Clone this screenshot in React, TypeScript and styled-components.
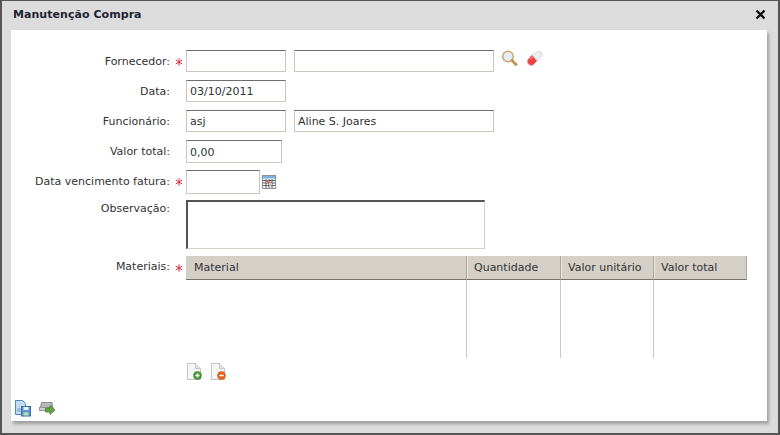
import React from "react";
import styled, { createGlobalStyle } from "styled-components";

const Global = createGlobalStyle`
  html, body { margin: 0; padding: 0; background: #ddd; overflow: hidden; }
  body { font-family: "DejaVu Sans", Verdana, sans-serif; font-size: 11px; color: #333; }
`;

const Dialog = styled.div`
  width: 780px; height: 435px; box-sizing: border-box;
  background: #dcdcdc;
  border-style: solid; border-color: #555;
  border-width: 1px 2px 2px 2px;
  padding: 0 11px 0 9px;
  display: flex; flex-direction: column;
`;
const TitleBar = styled.div`
  height: 29px; box-sizing: border-box; flex: none; display: flex; align-items: center; justify-content: space-between;
  padding: 0 1px 3px 2px;
`;
const Title = styled.h1`
  margin: 0; font-size: 11px; font-weight: bold; color: #1c2433; letter-spacing: 0.05px;
`;
const Close = styled.svg`
  width: 11px; height: 11px; display: block; margin-right: 0;
`;
const Panel = styled.div`
  height: 391px; flex: none; box-sizing: border-box; background: #fff;
  box-shadow: 2px 3px 3px rgba(0,0,0,0.28);
  padding-top: 20px; display: flex; flex-direction: column;
`;
const Row = styled.div<{ $mt?: number }>`
  display: flex; align-items: flex-start; margin-top: ${p => p.$mt ?? 8}px;
`;
const Label = styled.label<{ $pt?: number }>`
  width: 159px; flex: none; text-align: right; line-height: 14px; padding-top: ${p => p.$pt ?? 5}px; color: #333;
`;
const Req = styled.span`
  width: 16px; flex: none; box-sizing: border-box; padding: 8px 0 0 5px; display: block; height: 20px;
`;
const Input = styled.input<{ $w: number; $h?: number; $ml?: number }>`
  width: ${p => p.$w}px; height: ${p => p.$h ?? 22}px; box-sizing: border-box; flex: none;
  margin: 0 0 0 ${p => p.$ml ?? 0}px;
  border: 1px solid #c9c6be; border-top-color: #6e6e6e; border-radius: 0; outline: none;
  padding: 1px 3px 0; background: #fff; color: #333;
  font: 11px "DejaVu Sans", Verdana, sans-serif;
`;
const TextArea = styled.textarea`
  width: 299px; height: 49px; box-sizing: border-box; flex: none; display: block; margin: 0;
  border: 1px solid #d4d0c8; border-top: 2px solid #555; border-left: 2px solid #555;
  outline: none; resize: none; background: #fff; padding: 2px;
`;
const RowIcon = styled.svg<{ $ml: number; $mt?: number }>`
  display: block; flex: none; margin-left: ${p => p.$ml}px; margin-top: ${p => p.$mt ?? 0}px;
`;
const Table = styled.div`
  width: 561px; flex: none; height: 102px;
  display: grid; grid-template-columns: 281px 94px 93px 93px; grid-template-rows: 24px 78px;
`;
const Head = styled.div`
  background: #d4d0c8; border-bottom: 1px solid #77746e; box-sizing: border-box;
  padding: 0 0 0 7px; line-height: 23px; color: #333; position: relative;
  border-right: 1px solid #aaa7a0;
  box-shadow: inset 1px 0 0 #e8e6e1;
  &:first-child { box-shadow: none; padding-left: 8px; }
  &:last-child { border-right: 0; }
`;
const Cell = styled.div`
  border-right: 1px solid #c8c8c8; box-sizing: border-box;
  &:last-child { border-right: 0; }
`;
const Actions = styled.div`
  display: flex; gap: 7px; padding-left: 175px; margin-top: 5px; height: 18px;
`;
const Footer = styled.div`
  display: flex; gap: 7px; padding-left: 3px; margin-top: 19px;
`;
const Svg = styled.svg`
  display: block; flex: none;
`;

const Star = () => (
  <Svg width="8" height="8" viewBox="0 0 8 8">
    <path d="M4 .3V7.7M.8 2L7.2 6M7.2 2L.8 6" stroke="#d8283a" strokeWidth="1" fill="none" />
  </Svg>
);

const Page = ({ children }: { children?: React.ReactNode }) => (
  <>
    <path d="M1.5.5H9.5L14.5 5.5V16.5H1.5Z" fill="#f6f6f6" stroke="#c4c4c4" />
    <path d="M9.5.5V5.5H14.5" fill="#e4e4e4" stroke="#c4c4c4" />
    {children}
  </>
);

export default function App() {
  return (
    <>
      <Global />
      <Dialog>
        <TitleBar>
          <Title>Manutenção Compra</Title>
          <Close viewBox="0 0 11 11">
            <path d="M1.5 1.5L9.5 9.5M9.5 1.5L1.5 9.5" stroke="#111" strokeWidth="2.4" />
          </Close>
        </TitleBar>
        <Panel>
          <Row $mt={0}>
            <Label>Fornecedor:</Label>
            <Req><Star /></Req>
            <Input $w={100} />
            <Input $w={200} $ml={8} />
            <RowIcon $ml={7} width="18" height="17" viewBox="0 0 18 17">
              <circle cx="7" cy="6.5" r="5.3" fill="#e4edf6" stroke="#d2a468" strokeWidth="1.5" />
              <path d="M11 10.5L15 14.5" stroke="#c99258" strokeWidth="3" strokeLinecap="round" />
            </RowIcon>
            <RowIcon $ml={8} $mt={1} width="16" height="15" viewBox="0 0 16 15">
              <path d="M5 4L9.6 1.2A3.2 3.2 0 0 1 14.4 5.4L10 10Z" fill="#eeeeee" stroke="#cfcfcf" strokeWidth=".8" />
              <path d="M5 4L10 10L7.2 13A3.8 3.8 0 0 1 1.4 8Z" fill="#ee4044" stroke="#e3a8a8" strokeWidth=".6" />
              <path d="M3.4 8L5.6 6" stroke="#f9c0c0" strokeWidth="1" />
            </RowIcon>
          </Row>
          <Row>
            <Label>Data:</Label>
            <Req />
            <Input $w={100} defaultValue="03/10/2011" />
          </Row>
          <Row>
            <Label>Funcionário:</Label>
            <Req />
            <Input $w={100} defaultValue="asj" />
            <Input $w={200} $ml={8} defaultValue="Aline S. Joares" />
          </Row>
          <Row>
            <Label>Valor total:</Label>
            <Req />
            <Input $w={96} $h={23} defaultValue="0,00" />
          </Row>
          <Row $mt={7}>
            <Label>Data vencimento fatura:</Label>
            <Req><Star /></Req>
            <Input $w={74} $h={24} />
            <RowIcon $ml={2} $mt={5} width="14" height="14" viewBox="0 0 14 14">
              <rect x=".5" y=".5" width="13" height="13" fill="#fff" stroke="#8b9298" />
              <rect x="1" y="1" width="12" height="2.6" fill="#7fb2dc" />
              <path d="M1 5.5H13M1 8H13M1 10.6H13M4 4V13M7 4V13M10 4V13" stroke="#4e6268" strokeWidth="1" />
              <rect x="4" y="5.5" width="3" height="2.6" fill="#ef6a5e" />
              <rect x="7" y="8" width="3" height="2.6" fill="#f4b5ad" />
            </RowIcon>
          </Row>
          <Row $mt={6}>
            <Label $pt={2}>Observação:</Label>
            <Req />
            <TextArea />
          </Row>
          <Row $mt={7}>
            <Label $pt={4}>Materiais:</Label>
            <Req><Star /></Req>
            <Table>
              <Head>Material</Head>
              <Head>Quantidade</Head>
              <Head>Valor unitário</Head>
              <Head>Valor total</Head>
              <Cell /><Cell /><Cell /><Cell />
            </Table>
          </Row>
          <Actions>
            <Svg width="17" height="18" viewBox="0 0 17 18">
              <Page>
                <circle cx="11.5" cy="12.5" r="4" fill="#4d9a38" stroke="#3f7f2e" strokeWidth=".6" />
                <path d="M9.4 12.5H13.6M11.5 10.4V14.6" stroke="#fff" strokeWidth="1.3" />
              </Page>
            </Svg>
            <Svg width="17" height="18" viewBox="0 0 17 18">
              <Page>
                <circle cx="11.5" cy="12.5" r="4" fill="#e8661e" stroke="#cf5516" strokeWidth=".6" />
                <path d="M9.4 12.5H13.6" stroke="#fff" strokeWidth="1.5" />
              </Page>
            </Svg>
          </Actions>
          <Footer>
            <Svg width="18" height="17" viewBox="0 0 18 17">
              <path d="M1.5.5H8.5L11.5 3.5V14.5H1.5Z" fill="#c4dcf4" stroke="#4d86c8" />
              <path d="M3 9H7M3 11H7" stroke="#6ea2d8" />
              <rect x="7.5" y="6.5" width="9" height="9.5" fill="#5f94d4" stroke="#3a6cab" />
              <rect x="9.5" y="7" width="5" height="3" fill="#e8f0f8" />
              <rect x="9.5" y="12.5" width="5" height="3" fill="#b8e0a8" />
            </Svg>
            <Svg width="17" height="17" viewBox="0 0 17 17">
              <path d="M2.5 2.5H13L14 7.5H1.5Z" fill="#b8b8b8" stroke="#8c8c8c" />
              <rect x=".5" y="7.5" width="13" height="3" fill="#d0d0d0" stroke="#999" />
              <path d="M6.5 8H11V5.5L16 10L11 14.5V12H6.5Z" fill="#63a544" stroke="#3f7f2e" strokeWidth=".8" />
            </Svg>
          </Footer>
        </Panel>
      </Dialog>
    </>
  );
}
